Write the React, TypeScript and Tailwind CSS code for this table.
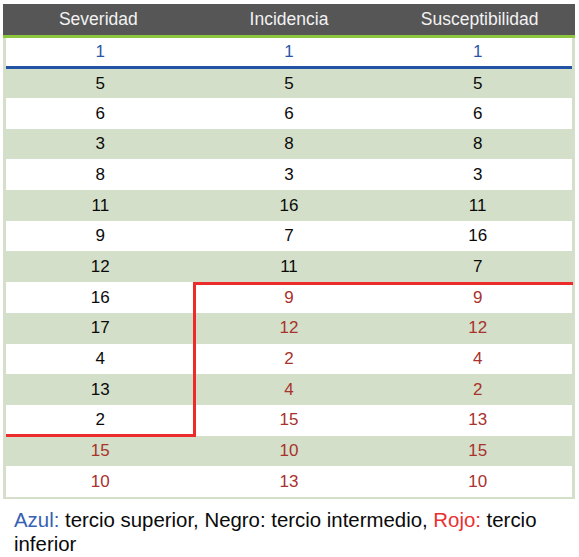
import React from "react";

type C = "b" | "k" | "r";
const rows: { v: string[]; c: C[] }[] = [
  { v: ["1", "1", "1"], c: ["b", "b", "b"] },
  { v: ["5", "5", "5"], c: ["k", "k", "k"] },
  { v: ["6", "6", "6"], c: ["k", "k", "k"] },
  { v: ["3", "8", "8"], c: ["k", "k", "k"] },
  { v: ["8", "3", "3"], c: ["k", "k", "k"] },
  { v: ["11", "16", "11"], c: ["k", "k", "k"] },
  { v: ["9", "7", "16"], c: ["k", "k", "k"] },
  { v: ["12", "11", "7"], c: ["k", "k", "k"] },
  { v: ["16", "9", "9"], c: ["k", "r", "r"] },
  { v: ["17", "12", "12"], c: ["k", "r", "r"] },
  { v: ["4", "2", "4"], c: ["k", "r", "r"] },
  { v: ["13", "4", "2"], c: ["k", "r", "r"] },
  { v: ["2", "15", "13"], c: ["k", "r", "r"] },
  { v: ["15", "10", "15"], c: ["r", "r", "r"] },
  { v: ["10", "13", "10"], c: ["r", "r", "r"] },
];

const colorCls: Record<C, string> = {
  b: "text-[#2a56a8]",
  k: "text-[#0a0a0a]",
  r: "text-[#a8322d]",
};

export default function App() {
  return (
    <div className="w-[579px] h-[557px] bg-white font-['Liberation_Sans',Arial,sans-serif] overflow-hidden">
      <div className="pt-[4px] pl-[3px] w-[575px]">
        <div className="grid grid-cols-3 h-[34px] bg-[#565656] border-b-[3px] border-[#8cc63f] text-[17.5px] text-[#f2f2f2] items-center text-center">
          <div>Severidad</div>
          <div>Incidencia</div>
          <div>Susceptibilidad</div>
        </div>
        <div className="relative bg-[#d3dfc8] px-[3px] pb-[2px]">
          {rows.map((r, i) => {
            const h =
              i === 0
                ? "h-[31px] border-b-[3px] border-[#2353a5]"
                : i === 1
                ? "h-[29px]"
                : "h-[30.7px]";
            const bg = i % 2 === 0 ? "bg-white" : "bg-[#d3dfc8]";
            return (
              <div
                key={i}
                className={`grid grid-cols-3 items-center text-center text-[17px] ${h} ${bg}`}
              >
                {r.v.map((v, j) => (
                  <div key={j} className={colorCls[r.c[j]]}>
                    {v}
                  </div>
                ))}
              </div>
            );
          })}
          <div className="absolute left-[190px] top-[244px] w-[380px] h-[3px] bg-[#ec2b2b]" />
          <div className="absolute left-[190px] top-[244px] w-[3px] h-[155px] bg-[#ec2b2b]" />
          <div className="absolute left-[3px] top-[396px] w-[190px] h-[3px] bg-[#ec2b2b]" />
        </div>
      </div>
      <p className="mt-[9px] pl-[14px] pr-[24px] text-[20.4px] leading-[24px] text-[#0a0a0a]">
        <span className="text-[#3560b4]">Azul:</span> tercio superior, Negro: tercio intermedio,{" "}
        <span className="text-[#ea3030]">Rojo:</span> tercio inferior
      </p>
    </div>
  );
}
